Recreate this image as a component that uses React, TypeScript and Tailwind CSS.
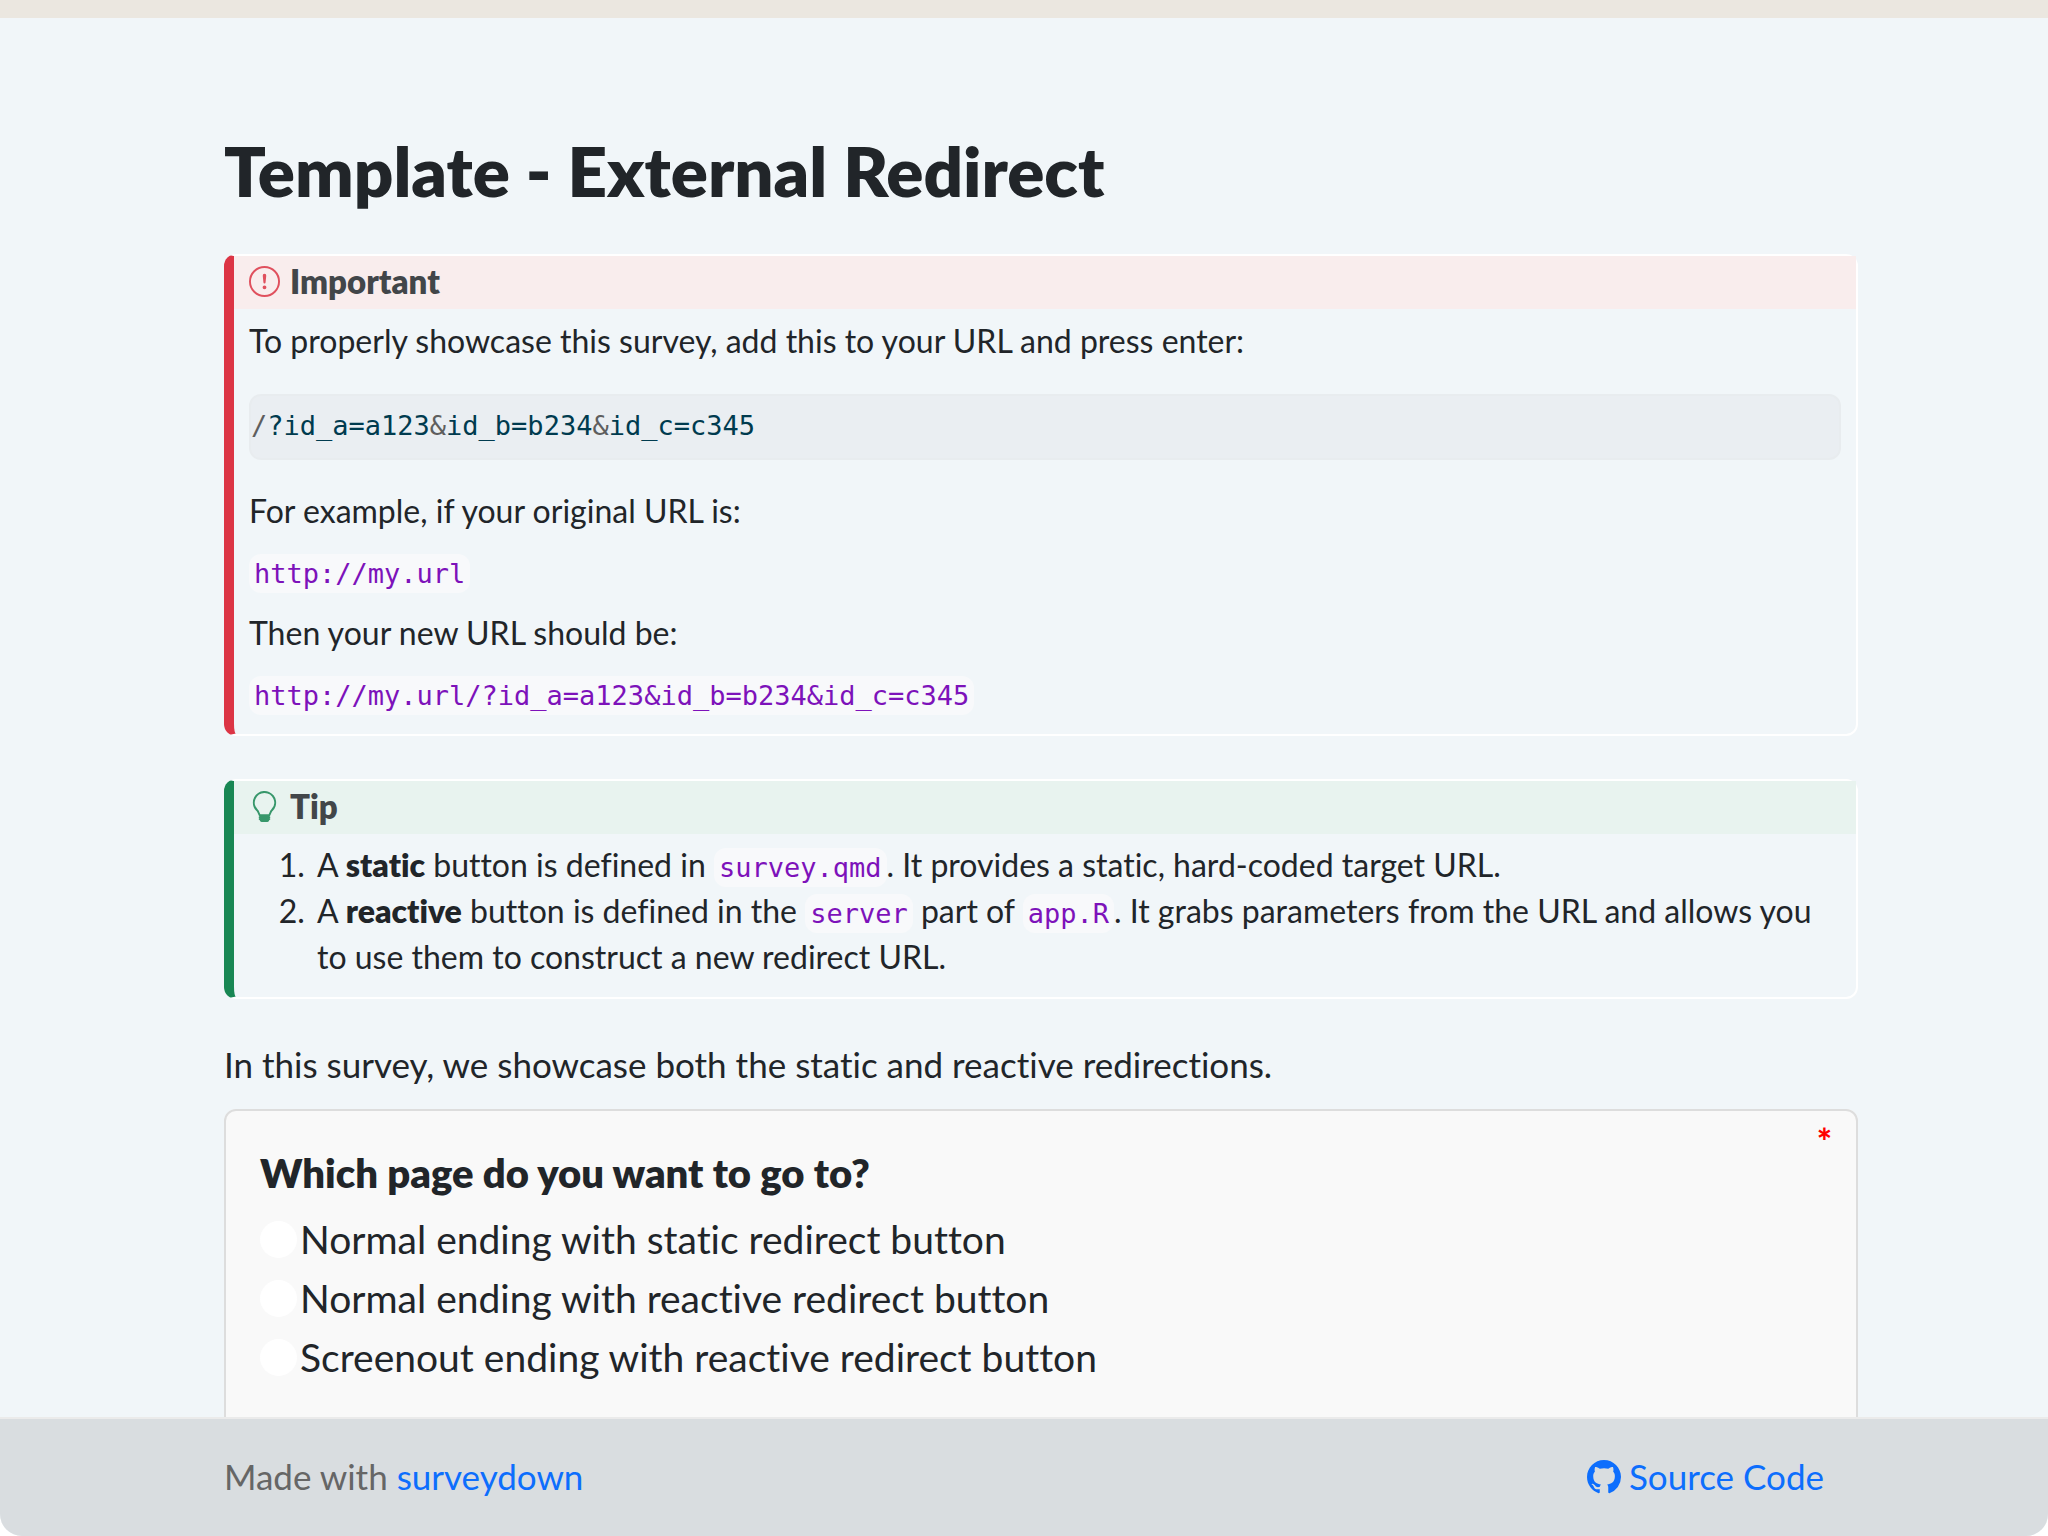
import React from "react";
import { BsExclamationCircle, BsGithub } from "react-icons/bs";

const options = [
  { value: "static", label: "Normal ending with static redirect button" },
  { value: "reactive", label: "Normal ending with reactive redirect button" },
  { value: "screenout", label: "Screenout ending with reactive redirect button" },
];

function BulbIcon() {
  return (
    <svg viewBox="0 0 16 16" fill="currentColor" className="size-[31px]" aria-hidden="true">
      <path d="M2 6a6 6 0 1 1 10.174 4.31c-.203.196-.359.4-.453.619l-.762 1.769A.5.5 0 0 1 10.5 13a.5.5 0 0 1 0 1 .5.5 0 0 1 0 1l-.224.447a1 1 0 0 1-.894.553H6.618a1 1 0 0 1-.894-.553L5.5 15a.5.5 0 0 1 0-1 .5.5 0 0 1 0-1 .5.5 0 0 1-.46-.302l-.761-1.77a1.964 1.964 0 0 0-.453-.618A5.984 5.984 0 0 1 2 6zm6-5a5 5 0 0 0-3.479 8.592c.263.254.514.564.676.941L5.83 12h4.342l.632-1.467c.162-.377.413-.687.676-.941A5 5 0 0 0 8 1z" />
    </svg>
  );
}

function Code({ children }: { children: React.ReactNode }) {
  return (
    <code className="rounded-xl bg-[#f8f9fb] px-[5px] py-1 font-['DejaVu_Sans_Mono',monospace] text-[27px] leading-none text-[#7d12ba]">
      {children}
    </code>
  );
}

function Amp() {
  return <span className="text-[#5e5e5e]">&amp;</span>;
}

function ImportantCallout() {
  return (
    <section className="mt-[45px] rounded-xl border-2 border-l-10 border-white border-l-[#dc3545]">
      <header className="flex h-[53px] items-start bg-[#f9eded] pt-[10px] pl-[15px]">
        <BsExclamationCircle className="size-[31px] text-[#dc3545] opacity-85" />
        <h2 className="ml-[10px] text-[33px] leading-[31px] font-extrabold text-[#424649]">Important</h2>
      </header>
      <div className="px-[15px] pt-[9px] pb-[18px] text-[32px] leading-[46px]">
        <p>To properly showcase this survey, add this to your URL and press enter:</p>
        <pre className="mt-[30px] mb-7 flex h-[66px] items-center rounded-xl border-2 border-[#e8ecef] bg-[#eaeef2] pb-[2px] font-['DejaVu_Sans_Mono',monospace] text-[27px] text-[#003b4f]">
          <code className="font-['DejaVu_Sans_Mono',monospace]">
            <span className="text-[#5e5e5e]">/</span>?id_a=a123
            <Amp />
            id_b=b234
            <Amp />
            id_c=c345
          </code>
        </pre>
        <p>For example, if your original URL is:</p>
        <p className="mt-[14px]">
          <Code>http://my.url</Code>
        </p>
        <p className="mt-4">Then your new URL should be:</p>
        <p className="mt-[14px]">
          <Code>http://my.url/?id_a=a123&amp;id_b=b234&amp;id_c=c345</Code>
        </p>
      </div>
    </section>
  );
}

function TipCallout() {
  return (
    <section className="mt-[43px] rounded-xl border-2 border-l-10 border-white border-l-[#198754]">
      <header className="flex h-[53px] items-start bg-[#e8f3ef] pt-[10px] pl-[15px] text-[#198754]">
        <span className="opacity-85">
          <BulbIcon />
        </span>
        <h2 className="ml-[10px] text-[33px] leading-[31px] font-extrabold text-[#424649]">Tip</h2>
      </header>
      <ol className="list-decimal pt-2 pr-[15px] pb-[17px] pl-[79px] text-[32px] leading-[46px]">
        <li className="pl-1">
          A <strong className="font-extrabold">static</strong> button is defined in <Code>survey.qmd</Code>. It
          provides a static, hard-coded target URL.
        </li>
        <li className="pl-1">
          A <strong className="font-extrabold">reactive</strong> button is defined in the <Code>server</Code> part of{" "}
          <Code>app.R</Code>. It grabs parameters from the URL and allows you to use them to construct a new redirect
          URL.
        </li>
      </ol>
    </section>
  );
}

function Question() {
  return (
    <fieldset className="relative mt-[19px] rounded-xl border-2 border-[#dddddd] bg-[#f9f9f9] px-[34px] pt-[35px] pb-16">
      <legend className="float-left w-full text-[40px] leading-[55px] font-extrabold">
        Which page do you want to go to?
      </legend>
      <span className="absolute top-3 right-[24px] text-[36px] leading-[36px] font-black text-[#ff0000]">*</span>
      <div className="clear-both pt-[9px]">
        {options.map((o) => (
          <label key={o.value} className="flex items-center text-[39px] leading-[59px]">
            <input
              type="radio"
              name="page"
              value={o.value}
              className="mr-[3px] size-[37px] shrink-0 appearance-none rounded-full bg-white checked:border-10 checked:border-[#0d6efd]"
            />
            {o.label}
          </label>
        ))}
      </div>
    </fieldset>
  );
}

export default function App() {
  return (
    <div className="h-screen bg-white font-['Lato',sans-serif] text-[#212529] [font-variant-ligatures:none]">
      <div className="flex h-full flex-col overflow-hidden rounded-b-[22px] bg-[#f1f6f9]">
        <div className="h-[18px] shrink-0 bg-[#ebe7e0]" />
        <main className="min-h-0 flex-1 overflow-hidden pt-[114px] pr-[190px] pl-56">
          <h1 className="text-[69px] leading-[77px] font-extrabold">Template - External Redirect</h1>
          <ImportantCallout />
          <TipCallout />
          <p className="mt-10 text-[35px] leading-[51px]">
            In this survey, we showcase both the static and reactive redirections.
          </p>
          <Question />
        </main>
        <footer className="flex shrink-0 items-center justify-between border-t-2 border-[#ebebeb] bg-[#d9dde0] pt-8 pr-56 pb-[34px] pl-56 text-[35px] leading-[51px] text-[#666666]">
          <p>
            Made with{" "}
            <a href="#surveydown" className="text-[#0d6efd]">
              surveydown
            </a>
          </p>
          <a href="#source" className="flex items-center gap-2 text-[#0d6efd]">
            <BsGithub className="size-[34px]" />
            Source Code
          </a>
        </footer>
      </div>
    </div>
  );
}
